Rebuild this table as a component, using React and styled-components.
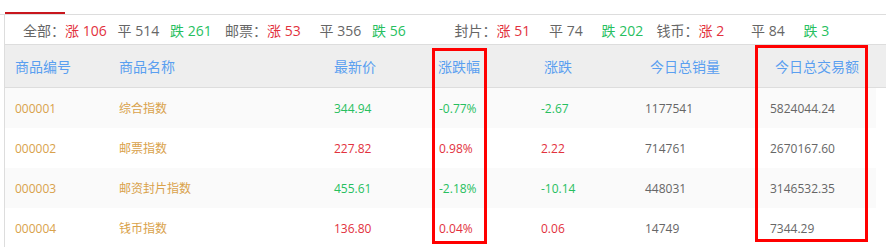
import React from "react";
import styled, { createGlobalStyle } from "styled-components";

const GlobalStyle = createGlobalStyle`
  body {
    margin: 0;
    background: #fff;
    font-family: "Open Sans", "Noto Sans CJK SC", sans-serif;
  }
`;

const RED = "#e2313d";
const GREEN = "#27bf5f";
const BLUE = "#5a9ff0";
const ORANGE = "#d9a24b";
const GREY = "#666";

const COLS = "104px 215px 105px 102px 104px 125px 116px";

const Page = styled.div`
  position: relative;
  width: 886px;
  height: 247px;
  overflow: hidden;
`;

const TabStrip = styled.div`
  height: 14px;
  border-bottom: 1px solid #ddd;
  display: flex;
  align-items: flex-end;
`;

const ActiveTab = styled.div`
  width: 60px;
  height: 2px;
  margin-left: 5px;
  background: #c8161d;
`;

const Panel = styled.div`
  margin-left: 4px;
  border-left: 1px solid #ddd;
`;

const Stats = styled.div`
  height: 29px;
  border-bottom: 1px solid #ddd;
  display: flex;
  align-items: center;
  padding-left: 18px;
  font-size: 14px;
  color: ${GREY};
`;

const Half = styled.div`
  width: 435px;
  display: flex;
`;

const Group = styled.div`
  width: 202px;
  display: flex;
  white-space: nowrap;
`;

const Label = styled.span`
  width: 42px;
`;

const Item = styled.span`
  width: 52.5px;
  color: ${({ $c }) => $c};
`;

const HeadRow = styled.div`
  display: grid;
  grid-template-columns: ${COLS};
  height: 42px;
  align-items: center;
  background: #eee;
  border-bottom: 1px solid #ddd;
  font-size: 14px;
  color: ${BLUE};
`;

const HeadCell = styled.div`
  padding-left: ${({ $shift = 0 }) => 10 + $shift}px;
  white-space: nowrap;
`;

const Row = styled.div`
  display: grid;
  grid-template-columns: ${COLS};
  height: 40px;
  align-items: center;
  width: 871px;
  background: ${({ $odd }) => ($odd ? "#fafafa" : "#fff")};
  font-size: 12px;
`;

const Cell = styled.div`
  padding-left: 10px;
  white-space: nowrap;
  color: ${({ $c }) => $c || GREY};
`;

const Marker = styled.div`
  position: absolute;
  border: 3px solid #ff0000;
  box-sizing: border-box;
  pointer-events: none;
`;

const groups = [
  [
    { label: "全部：", up: 106, flat: 514, down: 261 },
    { label: "邮票：", up: 53, flat: 356, down: 56 },
  ],
  [
    { label: "封片：", up: 51, flat: 74, down: 202 },
    { label: "钱币：", up: 2, flat: 84, down: 3 },
  ],
];

const heads = [
  ["商品编号", 0],
  ["商品名称", 0],
  ["最新价", 0],
  ["涨跌幅", -1],
  ["涨跌", 3],
  ["今日总销量", 5],
  ["今日总交易额", 5],
];

const rows = [
  ["000001", "综合指数", "344.94", "-0.77%", "-2.67", "1177541", "5824044.24"],
  ["000002", "邮票指数", "227.82", "0.98%", "2.22", "714761", "2670167.60"],
  ["000003", "邮资封片指数", "455.61", "-2.18%", "-10.14", "448031", "3146532.35"],
  ["000004", "钱币指数", "136.80", "0.04%", "0.06", "14749", "7344.29"],
];

const App = () => {
  return (
    <Page>
      <GlobalStyle />
      <TabStrip>
        <ActiveTab />
      </TabStrip>
      <Panel>
        <Stats>
          {groups.map((half, i) => (
            <Half key={i}>
              {half.map((g) => (
                <Group key={g.label}>
                  <Label>{g.label}</Label>
                  <Item $c={RED}>涨 {g.up}</Item>
                  <Item $c={GREY}>平 {g.flat}</Item>
                  <Item $c={GREEN}>跌 {g.down}</Item>
                </Group>
              ))}
            </Half>
          ))}
        </Stats>
        <HeadRow>
          {heads.map(([t, s]) => (
            <HeadCell key={t} $shift={s}>
              {t}
            </HeadCell>
          ))}
        </HeadRow>
        {rows.map((r, i) => {
          const c = r[4].startsWith("-") ? GREEN : RED;
          return (
            <Row key={r[0]} $odd={i % 2 === 0}>
              <Cell $c={ORANGE}>{r[0]}</Cell>
              <Cell $c={ORANGE}>{r[1]}</Cell>
              <Cell $c={c}>{r[2]}</Cell>
              <Cell $c={c}>{r[3]}</Cell>
              <Cell $c={c}>{r[4]}</Cell>
              <Cell>{r[5]}</Cell>
              <Cell>{r[6]}</Cell>
            </Row>
          );
        })}
      </Panel>
      <Marker style={{ left: 432, top: 48, width: 55, height: 196 }} />
      <Marker style={{ left: 755, top: 45, width: 113, height: 197 }} />
    </Page>
  );
};

export default App;
